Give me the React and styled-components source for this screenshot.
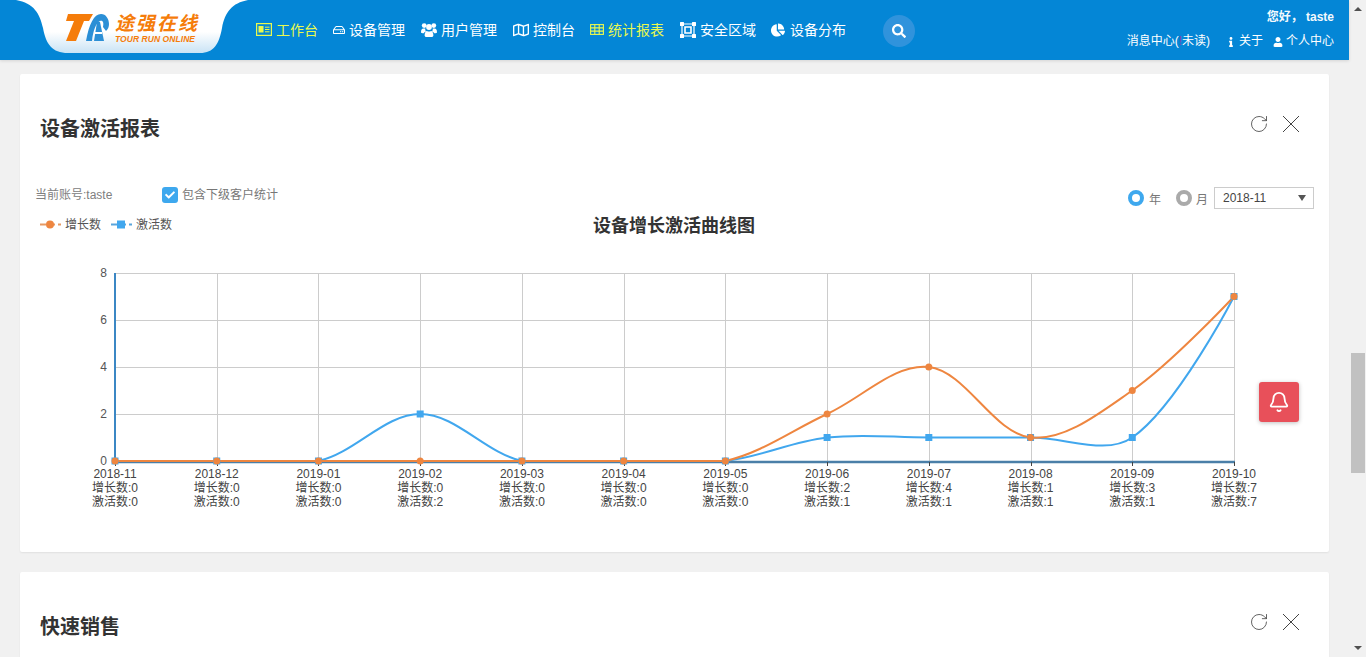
import React from 'react';
import styled, { createGlobalStyle } from 'styled-components';
import { FaRegHdd, FaRegMap, FaChartPie, FaSearch, FaInfo, FaUser, FaCheck } from 'react-icons/fa';
import { RotateCw, Bell } from 'lucide-react';

const Global = createGlobalStyle`
  html, body { margin: 0; padding: 0; height: 100%; overflow: hidden; background: #f1f1f1; }
  body { font-family: "Liberation Sans", "Noto Sans CJK SC", Arial, sans-serif; font-size: 12px; color: #333; }
`;

const Page = styled.div`display: flex; height: 657px; overflow: hidden;`;
const Main = styled.div`width: 1349px; flex: none; display: flex; flex-direction: column;`;
const Header = styled.header`
  height: 60px; flex: none; background: #0486d6; display: flex; align-items: stretch; position: relative;
  box-shadow: 0 1px 3px rgba(0,0,0,.12); color: #fff;
`;
const LogoBox = styled.div`width: 256px; flex: none;`;
const Nav = styled.nav`display: flex; align-items: center; height: 60px; flex: none;`;
const NavItem = styled.a`
  display: flex; align-items: center; gap: ${p => p.$gap || 4}px; margin-right: ${p => p.$mr || 16}px; font-size: 14px;
  line-height: 20px; padding-bottom: 1px;
  color: ${p => p.$on ? '#e9f94f' : '#fff'}; white-space: nowrap;
`;
const SearchBtn = styled.button`
  width: 32px; height: 32px; margin-left: 21px; margin-top: 2px; border: 0; padding: 0; border-radius: 50%; background: #3093dc; color: #fff;
  display: flex; align-items: center; justify-content: center;
`;
const UserBox = styled.div`
  margin-left: auto; padding: 10px 15px 0 0; display: flex; flex-direction: column; align-items: flex-end; gap: 9px; font-size: 12px;
`;
const Hello = styled.div`font-weight: 700; line-height: 15px; color: #f3f9fd;`;
const UserRow = styled.div`display: flex; align-items: center; line-height: 15px;`;
const Msg = styled.span`margin-right: 16px; b { color: #8a3fa8; font-weight: 400; }`;
const UserLink = styled.span`display: flex; align-items: center; gap: 3px; margin-left: ${p => p.$ml || 0}px;`;

const Content = styled.main`padding: 14px 20px 0; display: flex; flex-direction: column; gap: 20px;`;
const Card = styled.section`background: #fff; border-radius: 2px; box-shadow: 0 1px 2px rgba(0,0,0,.07); flex: none;`;
const CardHeader = styled.div`height: 108px; display: flex; align-items: center; justify-content: space-between; padding: 0 29px 0 20px;`;
const CardTitle = styled.h2`margin: 2px 0 0; font-size: 20px; line-height: 28px; font-weight: 700; color: #333;`;
const CardTools = styled.div`display: flex; gap: 13px; align-items: center; margin-bottom: 8px; color: #444;`;
const Toolbar = styled.div`height: 30px; padding: 0 15px; display: flex; align-items: flex-start;`;
const Account = styled.span`color: #808080; line-height: 16px; margin-top: 5px; width: 127px;`;
const Check = styled.label`display: flex; align-items: center; gap: 4px; color: #777; line-height: 16px; margin-top: 5px;`;
const CheckBox = styled.span`width: 16px; height: 16px; border-radius: 3px; background: #3ea8ee; color: #fff; display: flex; align-items: center; justify-content: center;`;
const RightTools = styled.div`margin-left: auto; display: flex; align-items: center; height: 22px; margin-top: 5px;`;
const Radio = styled.span`
  display: flex; align-items: center; gap: ${p => p.$gap}px; color: #777; margin-right: ${p => p.$mr}px;
  &::before { content: ''; width: 8px; height: 8px; border-radius: 50%; border: 4px solid ${p => p.$on ? '#3ea8ee' : '#aaa'}; background: #fff; }
`;
const Select = styled.div`
  height: 20px; width: 90px; border: 1px solid #ccc; display: flex; align-items: center; padding-left: 8px; color: #444; position: relative;
  &::after { content: ''; position: absolute; right: 7px; top: 7px; border: 4.5px solid transparent; border-top: 6px solid #555; border-bottom: 0; }
`;
const ChartSvg = styled.svg`display: block; width: 1309px; height: 340px; font-family: "Liberation Sans", "Noto Sans CJK SC", sans-serif;`;
const ScrollBar = styled.aside`width: 17px; flex: none; background: #f1f1f1; height: 657px; display: flex; flex-direction: column; align-items: center;`;
const ArrowUp = styled.span`
  width: 0; height: 0; border-left: 4px solid transparent; border-right: 4px solid transparent; border-bottom: 4px solid #505050; margin-top: 7px;
`;
const ArrowDown = styled.span`
  width: 0; height: 0; border-left: 4px solid transparent; border-right: 4px solid transparent; border-top: 4px solid #505050; margin-top: auto; margin-bottom: 7px;
`;
const Thumb = styled.span`width: 14px; height: 120px; background: #c1c1c1; margin-top: 342px; align-self: flex-end; margin-right: 1px;`;
const BellBtn = styled.button`
  position: fixed; left: 1259px; top: 382px; width: 40px; height: 40px; border: 0; padding: 0; border-radius: 3px; background: #e8505a; color: #fff;
  display: flex; align-items: center; justify-content: center; box-shadow: 0 1px 4px rgba(0,0,0,.25);
`;

const X0 = 115, STEP = (1234 - 115) / 11, Y0 = 461, UNIT = 23.5;
const months = ['2018-11','2018-12','2019-01','2019-02','2019-03','2019-04','2019-05','2019-06','2019-07','2019-08','2019-09','2019-10'];
const grow = [0,0,0,0,0,0,0,2,4,1,3,7];
const act = [0,0,0,2,0,0,0,1,1,1,1,7];
const px = i => X0 + STEP * i;
const py = v => Y0 - v * UNIT;
function spline(vals) {
  const p = vals.map((v, i) => [px(i), py(v)]);
  const top = Math.min(...p.map(q => q[1]));
  const smooth = 0.35;
  const last = p.length - 1;
  const dist = (a, b) => Math.hypot(a[0] - b[0], a[1] - b[1]);
  const handles = p.map((b, i) => {
    if (i === 0 || i === last) return { in: b, out: b };
    const a = p[i - 1], c = p[i + 1];
    const d1 = dist(a, b), d2 = dist(b, c);
    const vx = c[0] - a[0], vy = c[1] - a[1];
    const clampY = y => Math.max(top, Math.min(Y0, y));
    return {
      in: [b[0] - vx * smooth * d1 / (d1 + d2), clampY(b[1] - vy * smooth * d1 / (d1 + d2))],
      out: [b[0] + vx * smooth * d2 / (d1 + d2), clampY(b[1] + vy * smooth * d2 / (d1 + d2))],
    };
  });
  let d = `M${p[0][0]} ${p[0][1]}`;
  for (let i = 0; i < last; i++) {
    d += `C${handles[i].out[0]} ${handles[i].out[1]} ${handles[i + 1].in[0]} ${handles[i + 1].in[1]} ${p[i + 1][0]} ${p[i + 1][1]}`;
  }
  return d;
}
const ORANGE = '#ee8640', BLUE = '#41a7ee';

const Chart = () => (
  <ChartSvg viewBox="20 212 1309 340">
    <g fontSize="12" fill="#555">
      <line x1="40" x2="61" y1="224.5" y2="224.5" stroke="#e79a63" strokeWidth="2" strokeDasharray="6 3" />
      <circle cx="50" cy="224.5" r="4" fill={ORANGE} />
      <text x="65" y="228.5">增长数</text>
      <line x1="111" x2="132" y1="224.5" y2="224.5" stroke="#5aa5dc" strokeWidth="2" strokeDasharray="6 3" />
      <rect x="117" y="220.5" width="8" height="8" fill={BLUE} />
      <text x="136" y="228.5">激活数</text>
    </g>
    <text x="674" y="232" fontSize="18" fontWeight="700" textAnchor="middle" fill="#333">设备增长激活曲线图</text>
    <g stroke="#ccc" strokeWidth="1">
      {[8, 6, 4, 2].map(v => <line key={v} x1={X0} x2="1234" y1={Math.round(py(v)) + 0.5} y2={Math.round(py(v)) + 0.5} />)}
      {months.map((m, i) => i > 0 && <line key={m} x1={Math.round(px(i)) + 0.5} x2={Math.round(px(i)) + 0.5} y1="273" y2="461" />)}
    </g>
    <g fontSize="12" fill="#555" textAnchor="end">
      {[0, 2, 4, 6, 8].map(v => <text key={v} x="107" y={py(v) + 4}>{v}</text>)}
    </g>
    <line x1="115" x2="115" y1="273" y2="462" stroke="#3b87c4" strokeWidth="2" />
    <line x1="114" x2="1235" y1="462" y2="462" stroke="#4a7fa8" strokeWidth="2.5" />
    <g stroke="#444" strokeWidth="1">
      {months.map((m, i) => <line key={m} x1={Math.round(px(i)) + 0.5} x2={Math.round(px(i)) + 0.5} y1="462" y2="466" />)}
    </g>
    <g fill="none" strokeWidth="2">
      <path d={spline(act)} stroke={BLUE} />
      <path d={spline(grow)} stroke={ORANGE} />
    </g>
    {act.map((v, i) => <rect key={i} x={px(i) - 3.5} y={py(v) - 3.5} width="7" height="7" fill={BLUE} />)}
    {grow.map((v, i) => <circle key={i} cx={px(i)} cy={py(v)} r="3.5" fill={ORANGE} />)}
    <g fontSize="12" fill="#444" textAnchor="middle">
      {months.map((m, i) => (
        <text key={m} x={px(i)}>
          <tspan x={px(i)} y="477.5">{m}</tspan>
          <tspan x={px(i)} y="492">增长数:{grow[i]}</tspan>
          <tspan x={px(i)} y="506">激活数:{act[i]}</tspan>
        </text>
      ))}
    </g>
  </ChartSvg>
);

const LogoArt = () => (
  <svg width="256" height="60" viewBox="0 0 256 60" style={{ display: 'block' }}>
    <defs>
      <linearGradient id="lg" x1="0" y1="0" x2="0" y2="1">
        <stop offset="0.6" stopColor="#fff" />
        <stop offset="1" stopColor="#c9e3f5" />
      </linearGradient>
    </defs>
    <path d="M16 0C34 3 40 14 43 28C46 44 52 53 68 53H200C214 53 219 44 222 28C225 12 232 3 248 0Z" fill="url(#lg)" />
    <path d="M68 14H93L89 21H84L76 41H66L74 21H66Z" fill="#f57c0a" />
    <path d="M86 41C89 24 94 14 101 14C106 14 109 19 109 24C109 27 108 29 106 31L103 27C104 23 103 20 100 21C96 23 93 31 92 41Z" fill="#2b8fd6" />
    <path d="M97 22H100L104 41H94Z" fill="#2b8fd6" />
    <path d="M95 32H102V34H95Z" fill="#fff" />
    <text x="115" y="30" fontSize="19" fontWeight="700" fontStyle="italic" fill="#f57c0a" fontFamily='"Noto Sans CJK SC", sans-serif' textLength="82">途强在线</text>
    <text x="115" y="42" fontSize="8.5" fontWeight="700" fontStyle="italic" fill="#f57c0a" fontFamily='"Liberation Sans", sans-serif' textLength="80">TOUR RUN ONLINE</text>
  </svg>
);

const CardIcon = () => (
  <svg width="16" height="13" viewBox="0 0 16 13" fill="none">
    <rect x="0.6" y="0.6" width="14.8" height="11.8" stroke="#e9f94f" strokeWidth="1.2" />
    <rect x="2.5" y="3" width="5" height="6.5" fill="#e9f94f" />
    <path d="M9 4.2H13.5M9 6.5H13.5M9 8.8H13.5" stroke="#e9f94f" />
  </svg>
);
const UsersIcon = () => (
  <svg width="16" height="14" viewBox="0 0 16 14" fill="#fff">
    <circle cx="3.2" cy="2.6" r="2.4" />
    <circle cx="12.8" cy="2.6" r="2.4" />
    <circle cx="8" cy="4" r="2.9" />
    <path d="M0 9.5C0 6.5 1 5.5 2.5 5.6H4.4C3.9 6.6 4.5 8 5.3 8.6C3.8 9 3 9.6 2.8 10.2C1 10.2 0 10 0 9.5Z" />
    <path d="M16 9.5C16 6.5 15 5.5 13.5 5.6H11.6C12.1 6.6 11.5 8 10.7 8.6C12.2 9 13 9.6 13.2 10.2C15 10.2 16 10 16 9.5Z" />
    <path d="M3.6 12.2C3.6 9.6 4.8 8 6 7.9C7.2 8.6 8.8 8.6 10 7.9C11.2 8 12.4 9.6 12.4 12.2C12.4 13.4 11.6 14 10.6 14H5.4C4.4 14 3.6 13.4 3.6 12.2Z" />
  </svg>
);
const TableIcon = () => (
  <svg width="14" height="11" viewBox="0 0 14 11" fill="none" stroke="#e9f94f" strokeWidth="1.1">
    <rect x="0.6" y="0.6" width="12.8" height="9.8" />
    <path d="M0.6 3.9H13.4M0.6 7.1H13.4M4.8 0.6V10.4M9.2 0.6V10.4" />
  </svg>
);
const VectorIcon = () => (
  <svg width="16" height="16" viewBox="0 0 16 16" fill="#fff">
    <path d="M2 2H14V14H2Z" fill="none" stroke="#fff" strokeWidth="1.2" />
    <path d="M5 5H11V11H5Z" fill="none" stroke="#fff" strokeWidth="1.6" />
    <rect x="0" y="0" width="4" height="4" rx="0.5" />
    <rect x="12" y="0" width="4" height="4" rx="0.5" />
    <rect x="0" y="12" width="4" height="4" rx="0.5" />
    <rect x="12" y="12" width="4" height="4" rx="0.5" />
  </svg>
);
const CloseIcon = () => (
  <svg width="18" height="18" viewBox="0 0 18 18" stroke="#444" strokeWidth="1" fill="none">
    <path d="M1 1L17 17M17 1L1 17" />
  </svg>
);

export default function App() {
  return (
    <Page>
      <Global />
      <Main>
        <Header>
          <LogoBox><LogoArt /></LogoBox>
          <Nav>
            <NavItem $on $mr={15}><CardIcon />工作台</NavItem>
            <NavItem $mr={16}><FaRegHdd size={12} />设备管理</NavItem>
            <NavItem $mr={16}><UsersIcon />用户管理</NavItem>
            <NavItem $mr={15}><FaRegMap size={16} />控制台</NavItem>
            <NavItem $on $mr={16}><TableIcon />统计报表</NavItem>
            <NavItem $mr={15}><VectorIcon />安全区域</NavItem>
            <NavItem $gap={5}><FaChartPie size={14} />设备分布</NavItem>
            <SearchBtn aria-label="搜索"><FaSearch size={14} /></SearchBtn>
          </Nav>
          <UserBox>
            <Hello>您好， taste</Hello>
            <UserRow>
              <Msg>消息中心(<b>!</b>未读)</Msg>
              <UserLink><FaInfo size={10} />关于</UserLink>
              <UserLink $ml={10}><FaUser size={10} />个人中心</UserLink>
            </UserRow>
          </UserBox>
        </Header>
        <Content>
          <Card>
            <CardHeader>
              <CardTitle>设备激活报表</CardTitle>
              <CardTools>
                <RotateCw size={20} strokeWidth={1} />
                <CloseIcon />
              </CardTools>
            </CardHeader>
            <Toolbar>
              <Account>当前账号:taste</Account>
              <Check><CheckBox><FaCheck size={10} /></CheckBox>包含下级客户统计</Check>
              <RightTools>
                <Radio $on $gap={5} $mr={15}>年</Radio>
                <Radio $gap={4} $mr={6}>月</Radio>
                <Select>2018-11</Select>
              </RightTools>
            </Toolbar>
            <Chart />
          </Card>
          <Card>
            <CardHeader>
              <CardTitle>快速销售</CardTitle>
              <CardTools>
                <RotateCw size={20} strokeWidth={1} />
                <CloseIcon />
              </CardTools>
            </CardHeader>
          </Card>
        </Content>
      </Main>
      <ScrollBar>
        <ArrowUp />
        <Thumb />
        <ArrowDown />
      </ScrollBar>
      <BellBtn aria-label="通知"><Bell size={22} strokeWidth={2} /></BellBtn>
    </Page>
  );
}
